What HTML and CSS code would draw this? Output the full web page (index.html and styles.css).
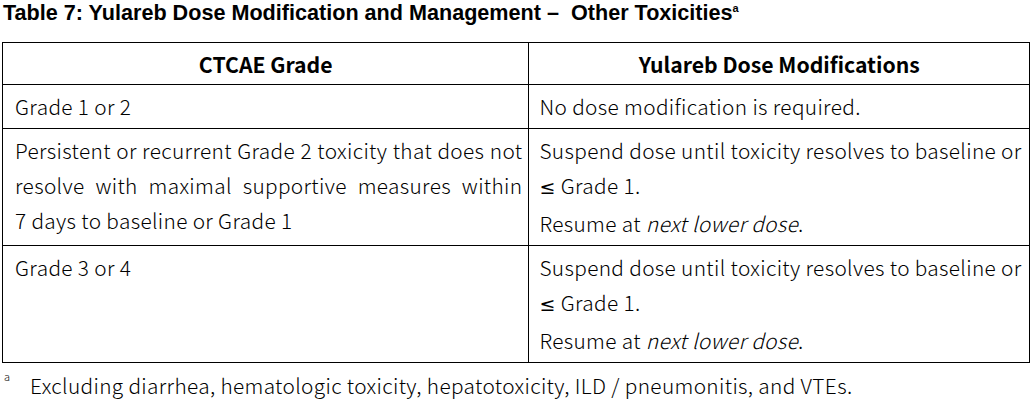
FILE: index.html
```html
<!DOCTYPE html>
<html lang="en">
<head>
<meta charset="utf-8">
<link rel="stylesheet" href="styles.css">
</head>
<body>
<h1 class="caption">Table 7: Yulareb Dose Modification and Management –&nbsp; Other Toxicities<sup>a</sup></h1>
<table class="dose">
  <colgroup><col class="c1"><col class="c2"></colgroup>
  <thead>
    <tr><th>CTCAE Grade</th><th>Yulareb Dose Modifications</th></tr>
  </thead>
  <tbody>
    <tr>
      <td>Grade 1 or 2</td>
      <td>No dose modification is required.</td>
    </tr>
    <tr>
      <td class="just">Persistent or recurrent Grade 2 toxicity that does not resolve with maximal supportive measures within 7&nbsp;days to baseline or Grade 1</td>
      <td><p>Suspend dose until toxicity resolves to baseline or <span class="le">≤</span> Grade 1.</p><p class="next">Resume at <em>next lower dose</em>.</p></td>
    </tr>
    <tr>
      <td>Grade 3 or 4</td>
      <td><p>Suspend dose until toxicity resolves to baseline or <span class="le">≤</span> Grade 1.</p><p class="next">Resume at <em>next lower dose</em>.</p></td>
    </tr>
  </tbody>
</table>
<p class="foot"><sup>a</sup><span>Excluding diarrhea, hematologic toxicity, hepatotoxicity, ILD / pneumonitis, and VTEs.</span></p>
</body>
</html>
```
FILE: styles.css
```css
body {
  margin: 0;
  padding: 0 2px;
  background: #fff;
  color: #000;
  font-family: "Noto Sans CJK JP", "Noto Sans", sans-serif;
}
.caption {
  margin: 0;
  padding: 0 0 0 1px;
  height: 42px;
  box-sizing: border-box;
  font-family: "Liberation Sans", Arial, sans-serif;
  font-weight: bold;
  font-size: 21.6px;
  line-height: 26px;
}
.caption sup {
  font-size: 11px;
  vertical-align: 8px;
  line-height: 0;
}
.dose {
  width: 1028px;
  border-collapse: collapse;
  font-size: 20.8px;
  font-weight: 300;
  letter-spacing: 0.35px;
  line-height: 35px;
}
.c1 { width: 527px; }
.c2 { width: 501px; }
.dose th, .dose td {
  border: 1px solid #000;
  vertical-align: top;
  text-align: left;
  padding: 4px 4px 4px 12px;
}
.dose td + td { padding-left: 10px; }
.dose th {
  font-weight: bold;
  font-size: 21.2px;
  letter-spacing: 0;
  text-align: center;
  height: 42px;
  box-sizing: border-box;
  vertical-align: middle;
  padding: 0 4px;
}
.dose tbody tr:first-child td { height: 35px; }
.dose td.just { text-align: justify; padding-right: 6px; }
.dose p { margin: 0; }
.dose p.next { margin-top: 3px; }
.dose em { font-style: italic; }
.dose .le {
  font-family: "DejaVu Sans", sans-serif;
  font-weight: normal;
  font-size: 19px;
  line-height: 0;
}
.foot {
  margin: 8px 0 0;
  font-size: 20.8px;
  font-weight: 300;
  letter-spacing: 0.35px;
  line-height: 28px;
  display: flex;
}
.foot sup {
  font-size: 11px;
  letter-spacing: 0;
  line-height: 1;
  width: 26px;
  padding-left: 2px;
}
```
